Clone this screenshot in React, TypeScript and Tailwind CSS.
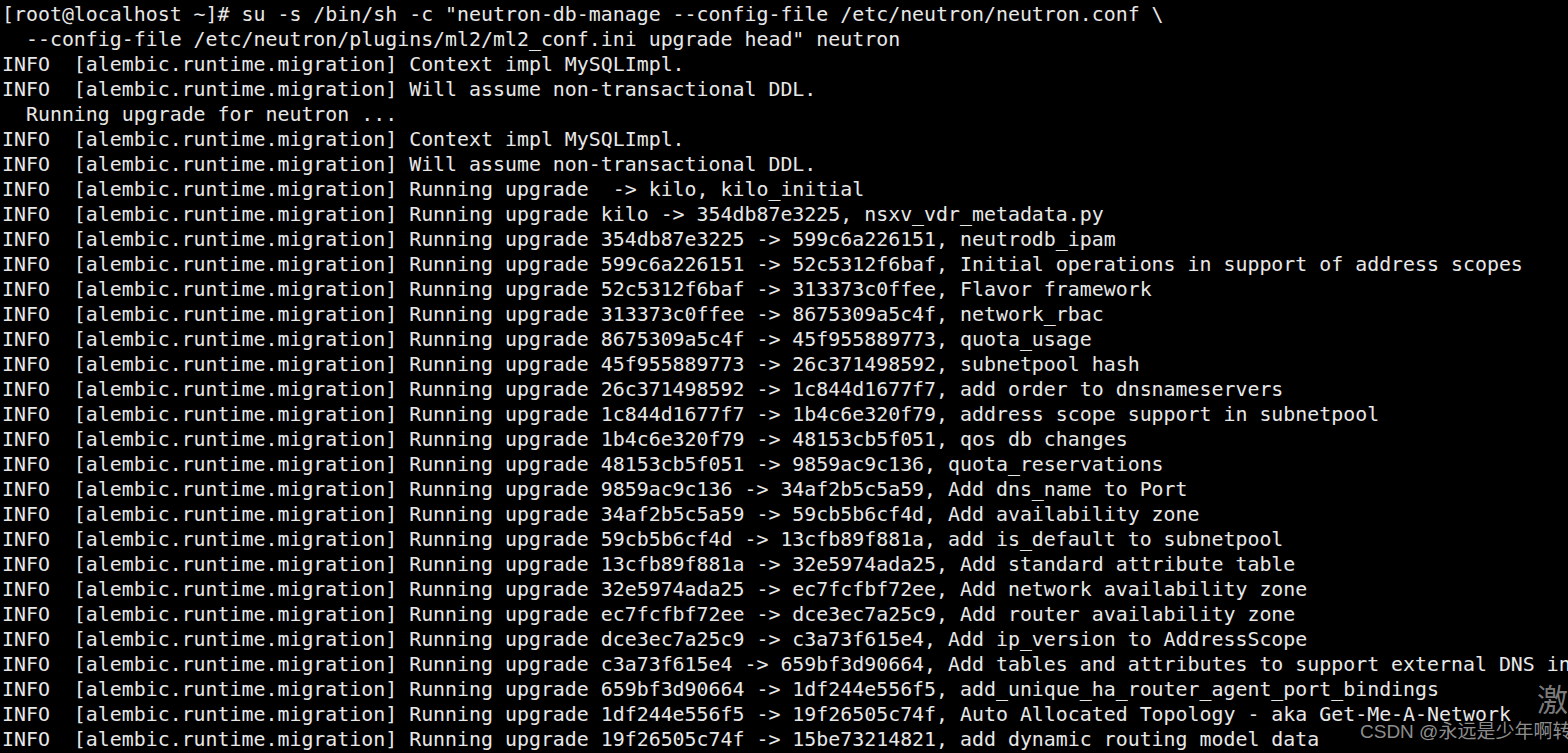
const lines = [
  `[root@localhost ~]# su -s /bin/sh -c "neutron-db-manage --config-file /etc/neutron/neutron.conf \\`,
  `  --config-file /etc/neutron/plugins/ml2/ml2_conf.ini upgrade head" neutron`,
  `INFO  [alembic.runtime.migration] Context impl MySQLImpl.`,
  `INFO  [alembic.runtime.migration] Will assume non-transactional DDL.`,
  `  Running upgrade for neutron ...`,
  `INFO  [alembic.runtime.migration] Context impl MySQLImpl.`,
  `INFO  [alembic.runtime.migration] Will assume non-transactional DDL.`,
  `INFO  [alembic.runtime.migration] Running upgrade  -> kilo, kilo_initial`,
  `INFO  [alembic.runtime.migration] Running upgrade kilo -> 354db87e3225, nsxv_vdr_metadata.py`,
  `INFO  [alembic.runtime.migration] Running upgrade 354db87e3225 -> 599c6a226151, neutrodb_ipam`,
  `INFO  [alembic.runtime.migration] Running upgrade 599c6a226151 -> 52c5312f6baf, Initial operations in support of address scopes`,
  `INFO  [alembic.runtime.migration] Running upgrade 52c5312f6baf -> 313373c0ffee, Flavor framework`,
  `INFO  [alembic.runtime.migration] Running upgrade 313373c0ffee -> 8675309a5c4f, network_rbac`,
  `INFO  [alembic.runtime.migration] Running upgrade 8675309a5c4f -> 45f955889773, quota_usage`,
  `INFO  [alembic.runtime.migration] Running upgrade 45f955889773 -> 26c371498592, subnetpool hash`,
  `INFO  [alembic.runtime.migration] Running upgrade 26c371498592 -> 1c844d1677f7, add order to dnsnameservers`,
  `INFO  [alembic.runtime.migration] Running upgrade 1c844d1677f7 -> 1b4c6e320f79, address scope support in subnetpool`,
  `INFO  [alembic.runtime.migration] Running upgrade 1b4c6e320f79 -> 48153cb5f051, qos db changes`,
  `INFO  [alembic.runtime.migration] Running upgrade 48153cb5f051 -> 9859ac9c136, quota_reservations`,
  `INFO  [alembic.runtime.migration] Running upgrade 9859ac9c136 -> 34af2b5c5a59, Add dns_name to Port`,
  `INFO  [alembic.runtime.migration] Running upgrade 34af2b5c5a59 -> 59cb5b6cf4d, Add availability zone`,
  `INFO  [alembic.runtime.migration] Running upgrade 59cb5b6cf4d -> 13cfb89f881a, add is_default to subnetpool`,
  `INFO  [alembic.runtime.migration] Running upgrade 13cfb89f881a -> 32e5974ada25, Add standard attribute table`,
  `INFO  [alembic.runtime.migration] Running upgrade 32e5974ada25 -> ec7fcfbf72ee, Add network availability zone`,
  `INFO  [alembic.runtime.migration] Running upgrade ec7fcfbf72ee -> dce3ec7a25c9, Add router availability zone`,
  `INFO  [alembic.runtime.migration] Running upgrade dce3ec7a25c9 -> c3a73f615e4, Add ip_version to AddressScope`,
  `INFO  [alembic.runtime.migration] Running upgrade c3a73f615e4 -> 659bf3d90664, Add tables and attributes to support external DNS in`,
  `INFO  [alembic.runtime.migration] Running upgrade 659bf3d90664 -> 1df244e556f5, add_unique_ha_router_agent_port_bindings`,
  `INFO  [alembic.runtime.migration] Running upgrade 1df244e556f5 -> 19f26505c74f, Auto Allocated Topology - aka Get-Me-A-Network`,
  `INFO  [alembic.runtime.migration] Running upgrade 19f26505c74f -> 15be73214821, add dynamic routing model data`,
];

export default function App() {
  return (
    <main className="relative h-[753px] w-[1568px] overflow-hidden bg-black">
      {/* terminal output */}
      <div className="flex flex-col pl-[2px] pt-[2px] font-['DejaVu_Sans_Mono',monospace] text-[19.9px] leading-[25px] text-[#e8e8e8]">
        {lines.map((l, i) => (
          <div key={i} className="whitespace-pre">{l}</div>
        ))}
      </div>

      {/* csdn watermark */}
      <div className="absolute left-[1537px] top-[682px] font-['Noto_Sans_CJK_SC',sans-serif] text-[31px] leading-none text-[#8c8c8c]/90">激</div>
      <div className="absolute left-[1360px] top-[720px] whitespace-nowrap font-['Liberation_Sans','Noto_Sans_CJK_SC',sans-serif] text-[19px] leading-[24px] text-[#a0a0a0]/90">
        CSDN @永远是少年啊转
      </div>
    </main>
  );
}
